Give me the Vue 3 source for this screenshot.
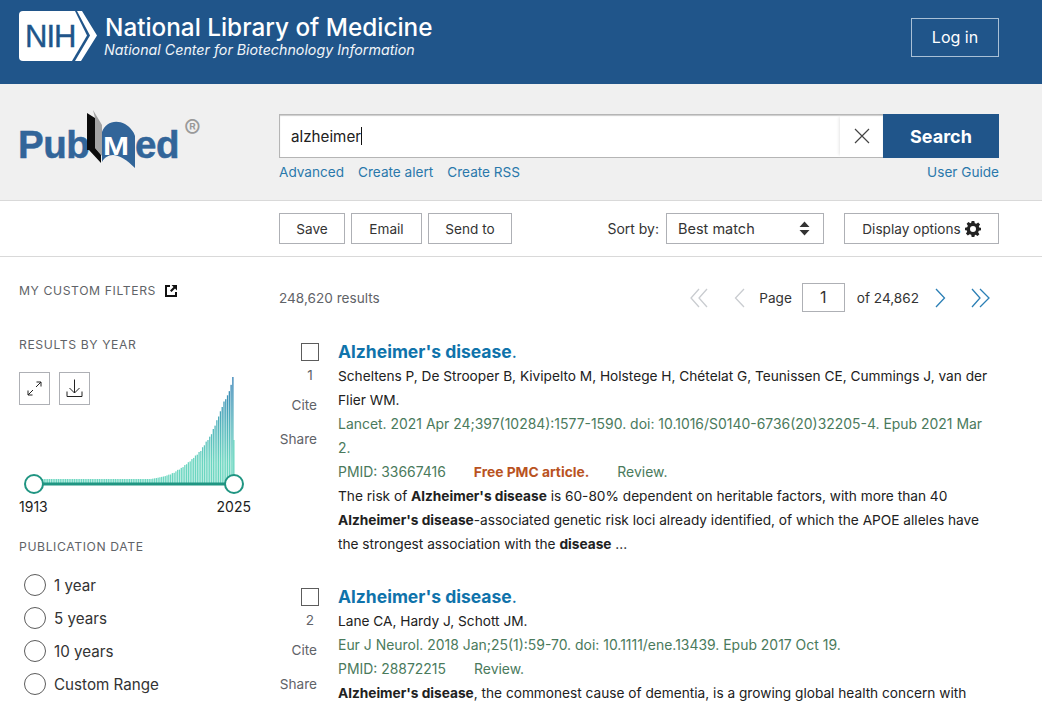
<script setup>
const pts = [[46,4],[150,4],[156,5],[165,7],[172,10],[180,14],[190,22],[200,32],[205,40],[210,47],[215,59],[220,72],[224,83],[226,85],[229,93],[230.5,98],[232,106]];
function h(x){
  for(let i=1;i<pts.length;i++){ if(x<=pts[i][0]){ const a=pts[i-1],b=pts[i]; return a[1]+(b[1]-a[1])*(x-a[0])/(b[0]-a[0]); } }
  return 106;
}
const bars = [];
for(let x=40;x<=233;x+=1.78){
  const v=h(x);
  const wob=(Math.round(x*7)%5-2)*0.3*(v>8&&v<100?1:0);
  bars.push({x:x-19,h:Math.max(4,v+wob)});
}
</script>

<template>
  <div class="page">
    <header class="nih">
      <div class="brand">
        <svg class="nih-logo" width="78" height="50" viewBox="0 0 78 50">
          <path d="M4 0H56L68 24.500L53 50H4Q0 50 0 46V4Q0 0 4 0Z" fill="#fff"/>
          <path d="M58 0H63L78 24.500L62 50H56L71 24.500Z" fill="#fff"/>
          <text x="6" y="36" class="nih-text">NIH</text>
        </svg>
        <div class="brand-text">
          <div class="brand-title">National Library of Medicine</div>
          <div class="brand-sub">National Center for Biotechnology Information</div>
        </div>
      </div>
      <button class="login">Log in</button>
    </header>

    <section class="band">
      <div class="logo-col">
        <svg width="190" height="66" viewBox="0 0 190 66">
          <text x="-1" y="50" class="pm-text">Pub</text>
          <path d="M74 2L83 17V48L76 40V10Z" fill="#a3a3a3"/>
          <path d="M68 5L76 10V40L82 47V55L70 42H68Z" fill="#0c0c0c"/>
          <path d="M83 24C86 15 96 11 106 16C111 19 115 24 116 28V60C108 52 100 47 94 47C89 47 85 50 83 54Z" fill="#326599"/>
          <text transform="translate(84 47) scale(1.25 1)" class="pm-m">M</text>
          <text x="116" y="50" class="pm-text">ed</text>
          <text x="165" y="30" class="pm-r">®</text>
        </svg>
      </div>
      <div class="search-col">
        <div class="search-row">
          <div class="search-box">
            <span class="typed">alzheimer</span><span class="caret"></span>
            <span class="clear">
              <svg width="16" height="16" viewBox="0 0 16 16"><path d="M1 1L15 15M15 1L1 15" stroke="#444" stroke-width="1.200" fill="none"/></svg>
            </span>
          </div>
          <button class="search-btn">Search</button>
        </div>
        <nav class="search-links">
          <a>Advanced</a><a>Create alert</a><a>Create RSS</a>
          <a class="guide">User Guide</a>
        </nav>
      </div>
    </section>

    <section class="toolbar">
      <div class="tool-left">
        <button class="tbtn save">Save</button>
        <button class="tbtn email">Email</button>
        <button class="tbtn send">Send to</button>
      </div>
      <div class="tool-right">
        <span class="sort-label">Sort by:</span>
        <div class="select">
          <span>Best match</span>
          <svg width="11" height="15" viewBox="0 0 11 15"><path d="M5.500 0.500L10.500 6H0.500Z M5.500 14.500L0.500 9H10.500Z" fill="#333"/></svg>
        </div>
        <button class="tbtn display">
          Display options
          <svg width="16" height="16" viewBox="0 0 24 24"><path fill-rule="evenodd" d="M10 0H14L14.700 3.300L17 4.300L19.800 2.400L22.600 5.200L20.700 8L21.700 10.300L24 10V14L20.700 14.700L19.700 17L21.600 19.800L18.800 22.600L16 20.700L14.700 21.200L14 24H10L9.300 20.700L7 19.700L4.200 21.600L1.400 18.800L3.300 16L2.300 13.700L0 14V10L3.300 9.300L4.300 7L2.400 4.200L5.200 1.400L8 3.300L9.300 2.800ZM12 7.500A4.500 4.500 0 1 0 12 16.500A4.500 4.500 0 1 0 12 7.500Z" fill="#222"/></svg>
        </button>
      </div>
    </section>

    <div class="content">
      <aside class="side">
        <h3 class="side-h custom">MY CUSTOM FILTERS
          <svg width="14" height="14" viewBox="0 0 14 14"><path d="M1 1H6V3H3V11H11V8H13V13H1Z" fill="#111"/><path d="M7.500 1H13V6.500L11 4.500L7.500 8L6 6.500L9.500 3Z" fill="#111"/></svg>
        </h3>
        <h3 class="side-h year">RESULTS BY YEAR</h3>
        <div class="chart">
          <div class="chart-btns">
            <button class="ibtn">
              <svg width="15" height="15" viewBox="0 0 15 15"><path d="M9 6L14 1M9.500 1H14V5.500M6 9L1 14M1 9.500V14H5.500" stroke="#222" fill="none" stroke-width="1"/></svg>
            </button>
            <button class="ibtn">
              <svg width="17" height="19" viewBox="0 0 17 19"><path d="M8.500 0.500V14M3.500 9L8.500 14L13.500 9M1 12.500V17.500H16V12.500" stroke="#222" fill="none" stroke-width="1"/></svg>
            </button>
          </div>
          <svg class="chart-svg" width="232" height="126" viewBox="0 0 232 126">
            <defs>
              <linearGradient id="barfill" gradientUnits="userSpaceOnUse" x1="0" y1="5" x2="0" y2="112">
                <stop offset="0" stop-color="#2f7db3"/>
                <stop offset="0.45" stop-color="#52b4bb"/>
                <stop offset="0.8" stop-color="#6bd6c0"/>
                <stop offset="1" stop-color="#6bd6c0"/>
              </linearGradient>
            </defs>
            <rect v-for="b in bars" :key="b.x" :x="b.x" :y="111 - b.h" width="1.300" :height="b.h" fill="url(#barfill)"/>
            <rect x="214.200" y="68" width="1.300" height="43" fill="#6bd6c0"/>
            <rect x="15" y="110.500" width="200" height="3" fill="#209582"/>
            <circle cx="15" cy="112" r="9" fill="#fff" stroke="#209582" stroke-width="2"/>
            <circle cx="215" cy="112" r="9" fill="#fff" stroke="#209582" stroke-width="2"/>
          </svg>
        </div>
        <div class="range"><span>1913</span><span>2025</span></div>
        <h3 class="side-h pub">PUBLICATION DATE</h3>
        <ul class="radios">
          <li><i></i>1 year</li>
          <li><i></i>5 years</li>
          <li><i></i>10 years</li>
          <li><i></i>Custom Range</li>
        </ul>
      </aside>

      <main class="main">
        <div class="count-row">
          <span class="count">248,620 results</span>
          <div class="pager">
            <svg class="p1" width="18" height="20" viewBox="0 0 18 20"><path d="M9 1L1 10L9 19M17 1L9 10L17 19" stroke="#c9ccd0" fill="none" stroke-width="1.300"/></svg>
            <svg class="p2" width="11" height="20" viewBox="0 0 11 20"><path d="M10 1L1.500 10L10 19" stroke="#c9ccd0" fill="none" stroke-width="1.300"/></svg>
            <span class="pg">Page</span>
            <span class="pbox">1</span>
            <span class="of">of 24,862</span>
            <svg class="p3" width="11" height="20" viewBox="0 0 11 20"><path d="M1 1L9.500 10L1 19" stroke="#2b7fb5" fill="none" stroke-width="1.300"/></svg>
            <svg class="p4" width="19" height="20" viewBox="0 0 19 20"><path d="M1 1L9 10L1 19M9 1L18 10L9 19" stroke="#2b7fb5" fill="none" stroke-width="1.300"/></svg>
          </div>
        </div>

        <article class="res first">
          <div class="res-left">
            <span class="cb"></span>
            <span class="num">1</span>
            <span class="act cite">Cite</span>
            <span class="act share">Share</span>
          </div>
          <div class="res-body">
            <a class="title">Alzheimer's disease<span class="dot">.</span></a>
            <p>Scheltens P, De Strooper B, Kivipelto M, Holstege H, Chételat G, Teunissen CE, Cummings J, van der<br>Flier WM.</p>
            <p class="cit">Lancet. 2021 Apr 24;397(10284):1577-1590. doi: 10.1016/S0140-6736(20)32205-4. Epub 2021 Mar<br>2.</p>
            <p class="cit"><span class="pmid">PMID: 33667416</span><b class="free">Free PMC article.</b><span>Review.</span></p>
            <p>The risk of <b>Alzheimer's disease</b> is 60-80% dependent on heritable factors, with more than 40<br><b>Alzheimer's disease</b>-associated genetic risk loci already identified, of which the APOE alleles have<br>the strongest association with the <b>disease</b> ...</p>
          </div>
        </article>

        <article class="res">
          <div class="res-left">
            <span class="cb"></span>
            <span class="num">2</span>
            <span class="act cite">Cite</span>
            <span class="act share">Share</span>
          </div>
          <div class="res-body">
            <a class="title">Alzheimer's disease<span class="dot">.</span></a>
            <p>Lane CA, Hardy J, Schott JM.</p>
            <p class="cit">Eur J Neurol. 2018 Jan;25(1):59-70. doi: 10.1111/ene.13439. Epub 2017 Oct 19.</p>
            <p class="cit"><span class="pmid">PMID: 28872215</span><span>Review.</span></p>
            <p><b>Alzheimer's disease</b>, the commonest cause of dementia, is a growing global health concern with</p>
          </div>
        </article>
      </main>
    </div>
  </div>
</template>

<style>
html, body { margin: 0; overflow: hidden; background: #fff; }
</style>

<style scoped>
.page { width: 1042px; height: 706px; overflow: hidden; font-family: Inter, "Liberation Sans", sans-serif; color: #212121; font-size: 13.600px; }
button { font-family: inherit; cursor: pointer; }
.nih { height: 84px; box-sizing: border-box; background: #20558a; padding: 11px 43px 0 19px; display: flex; justify-content: space-between; align-items: flex-start; color: #fff; }
.brand { display: flex; gap: 8px; }
.nih-logo { flex: none; }
.nih-text { font-family: "Liberation Sans", sans-serif; font-size: 31px; fill: #20558a; stroke: #20558a; stroke-width: 0.400px; letter-spacing: -1px; }
.brand-text { padding-top: 2px; }
.brand-title { font-size: 24.300px; line-height: 28px; font-weight: 500; }
.brand-sub { font-size: 14.250px; font-style: italic; line-height: 18px; color: #f0f4f8; margin-left: -1px; }
.login { margin-top: 7px; width: 88px; height: 39px; background: transparent; border: 1px solid #a9c0d6; color: #fff; font-size: 16px; padding: 0 0 2px; }
.band { height: 117px; box-sizing: border-box; background: #f0f0f0; border-bottom: 1px solid #d9d9d9; padding: 30px 43px 0 19px; display: flex; }
.logo-col { width: 260px; flex: none; margin-top: -6px; }
.pm-text { font-family: "Liberation Sans", sans-serif; font-weight: 700; font-size: 38.500px; fill: #326599; stroke: #326599; stroke-width: 0.500px; letter-spacing: -0.500px; }
.pm-m { font-family: "Liberation Sans", sans-serif; font-weight: 700; font-size: 25px; fill: #fff; }
.pm-r { font-family: Inter, sans-serif; font-size: 25px; fill: #9a9a9a; }
.search-col { flex: 1; }
.search-row { display: flex; height: 44px; }
.search-box { flex: 1; display: flex; align-items: center; background: #fff; border: 1px solid #b5b5b5; border-right: 0; box-sizing: border-box; padding-left: 11px; font-size: 16px; position: relative; box-shadow: inset 0 1px 1px #ccc; }
.typed { font-size: 15.200px; }
.caret { width: 1px; height: 18px; background: #111; }
.clear { margin-left: auto; width: 43px; height: 42px; display: flex; align-items: center; justify-content: center; box-shadow: -3px 0 3px -2px #e6e6e6; }
.search-btn { width: 116px; border: 0; background: #20558a; color: #fff; font-size: 18px; font-weight: 700; padding: 0; }
.search-links { display: flex; gap: 14px; margin-top: 6px; font-size: 13.600px; line-height: 17px; color: #2a78ab; }
.guide { margin-left: auto; }
.toolbar { height: 56px; box-sizing: border-box; border-bottom: 1px solid #d9d9d9; padding: 12px 43px 0 279px; display: flex; justify-content: space-between; }
.tool-left { display: flex; gap: 6px; }
.tbtn { height: 31px; background: #fff; border: 1px solid #aeb0b5; font-size: 13.600px; color: #333; padding: 0; display: flex; align-items: center; justify-content: center; }
.save { width: 66px; }
.email { width: 71px; }
.send { width: 84px; }
.tool-right { display: flex; align-items: flex-start; }
.sort-label { font-size: 14px; line-height: 31px; margin-right: 7px; color: #333; }
.select { width: 158px; height: 31px; box-sizing: border-box; border: 1px solid #aeb0b5; display: flex; align-items: center; justify-content: space-between; padding: 0 13px 0 11px; margin-right: 20px; font-size: 14.500px; color: #333; }
.display { width: 155px; gap: 4px; }
.content { display: flex; padding-left: 19px; }
.side { width: 260px; flex: none; padding-top: 26px; }
.side-h { margin: 0; font-size: 12.200px; line-height: 16px; font-weight: 400; letter-spacing: 0.600px; color: #5f6368; }
.custom { display: flex; align-items: center; gap: 8px; }
.year { margin-top: 38px; }
.chart { display: grid; width: 232px; margin-top: 19px; height: 125px; }
.chart-btns { grid-area: 1 / 1; display: flex; gap: 9px; align-items: flex-start; }
.chart-svg { grid-area: 1 / 1; }
.ibtn { width: 31px; height: 33px; background: #fff; border: 1px solid #aeb0b5; padding: 0; display: flex; align-items: center; justify-content: center; position: relative; z-index: 1; }
.range { width: 232px; display: flex; justify-content: space-between; font-size: 14px; line-height: 17px; margin-top: 1px; }
.pub { margin-top: 24px; }
.radios { list-style: none; margin: 14px 0 0; padding: 0 0 0 5px; font-size: 15.200px; }
.radios li { height: 32.900px; display: flex; align-items: center; gap: 8px; color: #333; }
.radios i { width: 20px; height: 20px; border: 1px solid #5c5c5c; border-radius: 50%; display: block; }
.main { flex: 1; padding-right: 43px; }
.count-row { display: flex; justify-content: space-between; align-items: center; height: 29px; margin-top: 26px; }
.count { font-size: 13.600px; color: #5f6368; }
.pager { display: flex; align-items: center; font-size: 13.600px; color: #333; margin-right: 9px; }
.p2 { margin-left: 26px; }
.pg { margin-left: 14px; }
.pbox { width: 43px; height: 29px; box-sizing: border-box; border: 1px solid #aeb0b5; margin-left: 10px; text-align: center; line-height: 27px; font-size: 16px; }
.of { margin-left: 12px; }
.p3 { margin-left: 16px; }
.p4 { margin-left: 25px; }
.res { display: flex; gap: 19px; }
.first { margin-top: 27px; }
.res + .res { margin-top: 28px; }
.res-left { width: 40px; flex: none; display: flex; flex-direction: column; align-items: flex-end; }
.cb { border: 1px solid #5c5c5c; margin-top: 4px; width: 16px; height: 16px; }
.num { width: 18px; text-align: center; font-size: 13.600px; line-height: 17px; color: #5f6368; margin-top: 6px; }
.act { font-size: 13.600px; line-height: 17px; color: #5f6368; margin-right: 2px; }
.cite { margin-top: 13px; }
.share { margin-top: 17px; }
.res-body { flex: 1; min-width: 0; }
.title { display: block; font-size: 17.500px; line-height: 25px; font-weight: 700; color: #0f73ab; }
.dot { font-weight: 400; }
.res-body p { margin: 0; font-size: 13.680px; line-height: 24px; color: #212121; }
.res-body p.cit { font-size: 13.950px; color: #4a7a5c; }
.pmid { margin-right: 28px; }
.free { color: #b9531f; margin-right: 28px; font-weight: 700; font-size: 13.800px; }
</style>
